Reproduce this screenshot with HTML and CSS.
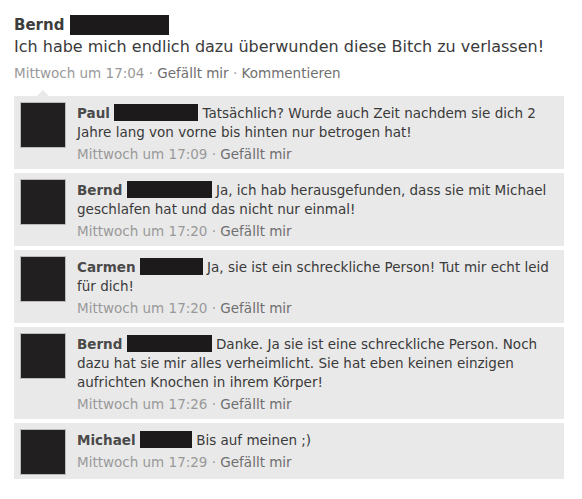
FILE: index.html
```html
<!DOCTYPE html>
<html lang="de">
<head>
  <meta charset="UTF-8" />
  <meta name="viewport" content="width=device-width, initial-scale=1.0"/>
  <title>Beitrag</title>
  <link rel="stylesheet" href="styles.css">
</head>
<body>
  <div class="post">
    <div class="author"><span>Bernd</span><span class="hidden wide"></span></div>
    <div class="message">Ich habe mich endlich dazu überwunden diese Bitch zu verlassen!</div>
    <div class="meta">Mittwoch um 17:04 · <a>Gefällt mir</a> · <a>Kommentieren</a></div>

    <div class="comments">
      <div class="comment">
        <div class="avatar"></div>
        <div class="body">
          <div class="text"><b>Paul</b> <span class="hidden" style="width:84px"></span> Tatsächlich? Wurde auch Zeit nachdem sie dich 2 Jahre lang von vorne bis hinten nur betrogen hat!</div>
          <div class="meta">Mittwoch um 17:09 · <a>Gefällt mir</a></div>
        </div>
      </div>

      <div class="comment">
        <div class="avatar"></div>
        <div class="body">
          <div class="text"><b>Bernd</b> <span class="hidden" style="width:85px"></span> Ja, ich hab herausgefunden, dass sie mit Michael geschlafen hat und das nicht nur einmal!</div>
          <div class="meta">Mittwoch um 17:20 · <a>Gefällt mir</a></div>
        </div>
      </div>

      <div class="comment">
        <div class="avatar"></div>
        <div class="body">
          <div class="text"><b>Carmen</b> <span class="hidden" style="width:63px"></span> Ja, sie ist ein schreckliche Person! Tut mir echt leid für dich!</div>
          <div class="meta">Mittwoch um 17:20 · <a>Gefällt mir</a></div>
        </div>
      </div>

      <div class="comment">
        <div class="avatar"></div>
        <div class="body">
          <div class="text"><b>Bernd</b> <span class="hidden" style="width:85px"></span> Danke. Ja sie ist eine schreckliche Person. Noch dazu hat sie mir alles verheimlicht. Sie hat eben keinen einzigen aufrichten Knochen in ihrem Körper!</div>
          <div class="meta">Mittwoch um 17:26 · <a>Gefällt mir</a></div>
        </div>
      </div>

      <div class="comment">
        <div class="avatar"></div>
        <div class="body">
          <div class="text"><b>Michael</b> <span class="hidden" style="width:52px"></span> Bis auf meinen ;)</div>
          <div class="meta">Mittwoch um 17:29 · <a>Gefällt mir</a></div>
        </div>
      </div>
    </div>
  </div>
</body>
</html>
```

FILE: styles.css
```css
body { margin: 0; padding: 15px 18px 0 14px; background: #fff; font-family: "DejaVu Sans", sans-serif; color: #333; }
.post { max-width: 550px; }
.author { font-size: 15px; font-weight: bold; color: #3d3d3d; line-height: 20px; display: flex; align-items: center; gap: 6px; }
.hidden { display: inline-block; height: 17px; background: #1c1a1b; vertical-align: -3px; }
.hidden.wide { flex: none; width: 99px; height: 20px; }
.message { font-size: 16px; line-height: 22px; color: #3a3a3a; margin-top: 1px; }
.meta { font-size: 13.5px; line-height: 18px; color: #999; margin-top: 6px; }
.meta a { color: #6f6f6f; }
.comments { margin-top: 8px; padding-top: 6px; position: relative; }
.comments::before { content: ""; position: absolute; top: 0; left: 23px; border: 6px solid transparent; border-top: 0; border-bottom-color: #e9e9e9; }
.comment { display: flex; gap: 12px; background: #e9e9e9; padding: 7px 7px 5px 7px; margin-bottom: 4px; }
.avatar { width: 44px; height: 44px; flex: none; background: #221f20; box-shadow: 0 0 0 1px #bbb; }
.body { flex: 1; padding-top: 1px; }
.text { font-size: 13.5px; line-height: 19px; color: #3a3a3a; }
.text b { color: #4a4a4a; }
.comment .meta { margin-top: 3px; line-height: 19px; }
```
